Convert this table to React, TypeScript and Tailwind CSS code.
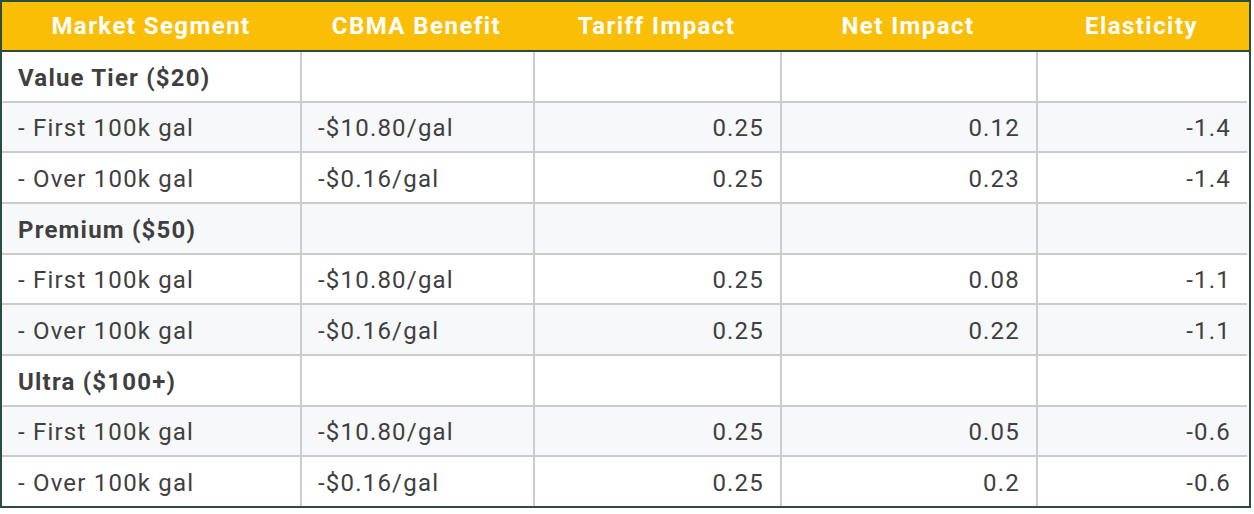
const headers = ['Market Segment', 'CBMA Benefit', 'Tariff Impact', 'Net Impact', 'Elasticity'];

type Row = { label: string; group?: boolean; cbma?: string; tariff?: string; net?: string; elasticity?: string };

const rows: Row[] = [
  { label: 'Value Tier ($20)', group: true },
  { label: '- First 100k gal', cbma: '-$10.80/gal', tariff: '0.25', net: '0.12', elasticity: '-1.4' },
  { label: '- Over 100k gal', cbma: '-$0.16/gal', tariff: '0.25', net: '0.23', elasticity: '-1.4' },
  { label: 'Premium ($50)', group: true },
  { label: '- First 100k gal', cbma: '-$10.80/gal', tariff: '0.25', net: '0.08', elasticity: '-1.1' },
  { label: '- Over 100k gal', cbma: '-$0.16/gal', tariff: '0.25', net: '0.22', elasticity: '-1.1' },
  { label: 'Ultra ($100+)', group: true },
  { label: '- First 100k gal', cbma: '-$10.80/gal', tariff: '0.25', net: '0.05', elasticity: '-0.6' },
  { label: '- Over 100k gal', cbma: '-$0.16/gal', tariff: '0.25', net: '0.2', elasticity: '-0.6' },
];

export default function App() {
  return (
    <div className="bg-white w-[1254px] h-[514px] font-['Roboto',sans-serif]">
      <div className="w-[1251px] border-2 border-[#2a4d3e]">
        <div className="grid grid-cols-[298px_233px_247px_256px_211px] bg-[#f9be05] h-[50px] border-b-2 border-[#2a4d3e]">
          {headers.map((h) => (
            <div key={h} className="flex items-center justify-center pb-px text-white font-bold text-[24px] tracking-[0.06em]">
              {h}
            </div>
          ))}
        </div>
        {rows.map((r, i) => {
          const last = i === rows.length - 1;
          const bg = i % 2 === 1 ? 'bg-[#f7f8fa]' : 'bg-white';
          const cell = `flex items-center px-4 pt-[3px] border-[#cccccc] ${last ? '' : 'border-b-2'}`;
          return (
            <div
              key={i}
              className={`grid grid-cols-[300px_233px_247px_256px_209px] h-[50.67px] text-[24px] tracking-[0.05em] text-[#3f3f3f] ${bg}`}
              style={last ? { height: '48.67px' } : undefined}
            >
              <div className={`${cell} border-r-2 ${r.group ? 'font-bold' : ''}`}>{r.label}</div>
              <div className={`${cell} border-r-2`}>{r.cbma}</div>
              <div className={`${cell} border-r-2 justify-end`}>{r.tariff}</div>
              <div className={`${cell} border-r-2 justify-end`}>{r.net}</div>
              <div className={`${cell} justify-end`}>{r.elasticity}</div>
            </div>
          );
        })}
      </div>
    </div>
  );
}
